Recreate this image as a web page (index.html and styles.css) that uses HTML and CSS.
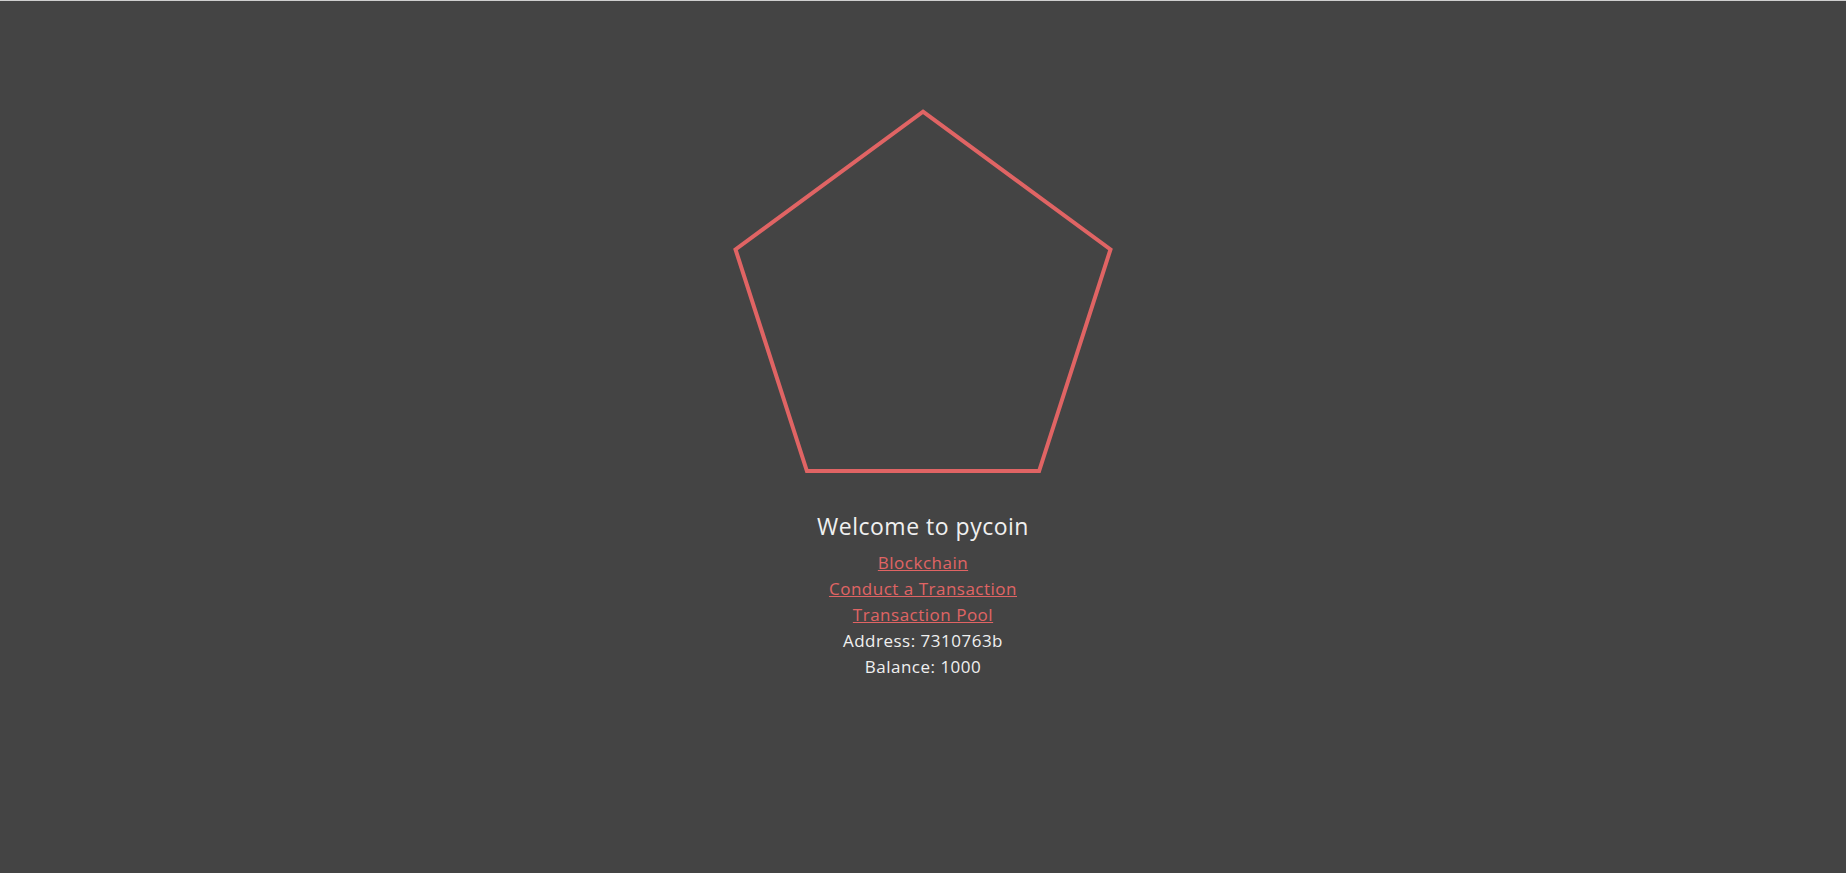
FILE: index.html
```html
<!DOCTYPE html>
<html>
<head>
<meta charset="utf-8">
<title>pycoin</title>
<link rel="stylesheet" href="styles.css">
</head>
<body>
<div class="app">
  <svg class="logo" width="400" height="380" viewBox="0 0 400 380">
    <polygon points="200,9.7 387.5,147.4 316.1,369 83.9,369 12.5,147.4" fill="none" stroke="#e06464" stroke-width="4" stroke-linejoin="miter"/>
  </svg>
  <h3 class="title">Welcome to pycoin</h3>
  <nav class="links">
    <a href="#">Blockchain</a>
    <a href="#">Conduct a Transaction</a>
    <a href="#">Transaction Pool</a>
  </nav>
  <div class="info">
    <div>Address: 7310763b</div>
    <div>Balance: 1000</div>
  </div>
</div>
</body>
</html>
```

FILE: styles.css
```css
html, body {
  margin: 0;
  padding: 0;
  height: 100%;
}
body {
  background: #444444;
  border-top: 1px solid #cfcfcf;
  box-sizing: border-box;
  font-family: "Open Sans", "Noto Sans", sans-serif;
  color: #f0f0f0;
}
.app {
  display: flex;
  flex-direction: column;
  align-items: center;
  padding-top: 101px;
  text-align: center;
}
.logo {
  display: block;
}
.title {
  margin: 29px 0 0 0;
  font-size: 23px;
  font-weight: 400;
  line-height: 30px;
  letter-spacing: 0.5px;
}
.links {
  display: flex;
  flex-direction: column;
  align-items: center;
  margin-top: 9px;
}
.links a {
  color: #e06464;
  font-size: 17px;
  line-height: 26px;
  text-decoration: underline;
  letter-spacing: 0.5px;
}
.info {
  font-size: 17px;
  line-height: 26px;
  letter-spacing: 0.5px;
}
```
